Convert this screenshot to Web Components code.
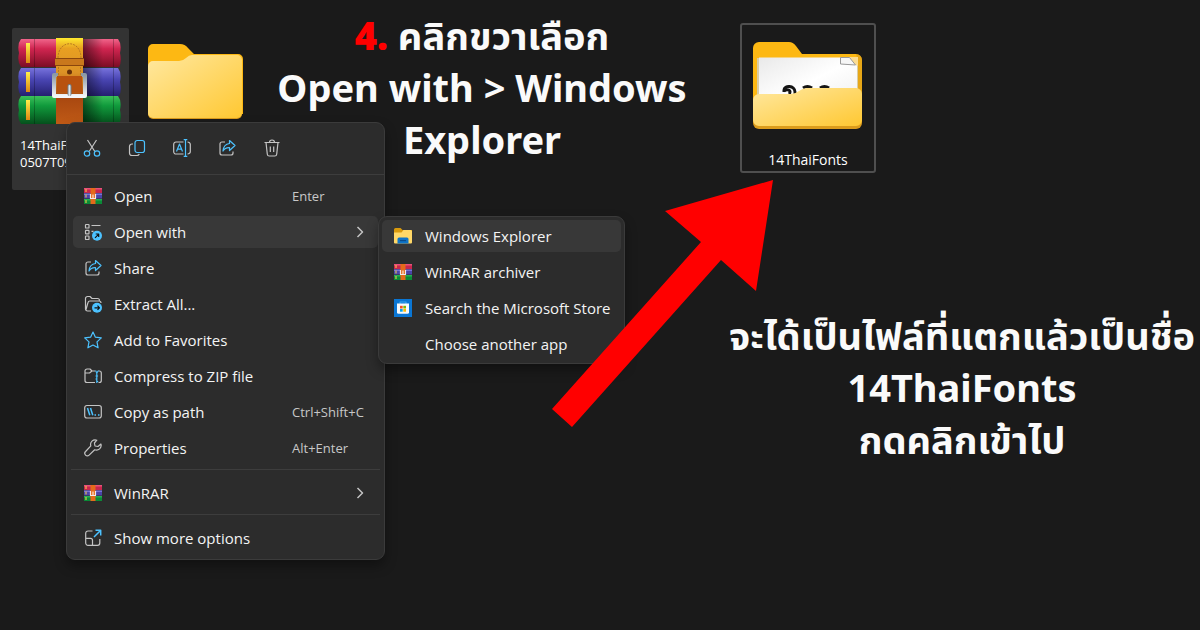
<!DOCTYPE html>
<html lang="th">
<head>
<meta charset="utf-8">
<meta name="viewport" content="width=device-width, initial-scale=1">
<title>14ThaiFonts</title>
<style>
  body {
    margin: 0;
    background: #1a1a1a;
    color: #fff;
    font-family: "Open Sans", "Noto Sans", sans-serif;
  }
</style>
</head>
<body>
<guide-page></guide-page>

<script>
const BLUE = '#4cc2ff';

const WINRAR = `
  <path fill="#c8264e" d="M0 1h18v5H0z"/><path fill="#e8517a" d="M0 1h18v1.5H0z"/>
  <path fill="#4a45a8" d="M0 6.5h18v5H0z"/><path fill="#7770d6" d="M0 6.5h18V8H0z"/>
  <path fill="#0b8a37" d="M0 12h18v5H0z"/><path fill="#25b052" d="M0 12h18v1.5H0z"/>
  <path fill="#ffd24a" d="M1.5 2h1v3h-1zM1.5 7.500h1v3h-1zM1.500 13h1v3h-1z"/>
  <path fill="#e46a1b" d="M6.500 1h5v16h-5z"/>
  <path fill="none" stroke="#f3e9ea" stroke-width="1.200" d="M6.500 7v4.500h5V7"/>
  <path fill="#fff" d="M8.500 7.500h1V11h-1z"/>`;

const SHARE = `
  <path d="M7 3H4a2 2 0 0 0-2 2v9a2 2 0 0 0 2 2h9a2 2 0 0 0 2-2v-1.500"/>
  <path stroke="${BLUE}" d="M11.500 1.500 17 6.500l-5.500 5V8.700C8.500 8.500 6.500 9.500 5 12c.3-4 2.500-7 6.500-7.500z"/>`;

// 18x18 glyphs, drawn with a light outline unless a shape sets its own paint
const ICONS = {
  cut: `<path d="M4.500 1l7.300 11.500M13.500 1 6.200 12.500"/>
    <g stroke="${BLUE}"><circle cx="4" cy="14.500" r="2.700"/><circle cx="14" cy="14.500" r="2.700"/></g>`,
  copy: `<path d="M5 5H4a2.500 2.500 0 0 0-2.500 2.500V14A2.500 2.500 0 0 0 4 16.500h5a2.500 2.500 0 0 0 2.300-1.500"/>
    <rect x="7" y="1.500" width="9.500" height="12" rx="2.200" stroke="${BLUE}"/>`,
  rename: `<path d="M10.500 3H3a2.300 2.300 0 0 0-2.300 2.300v7.400A2.300 2.300 0 0 0 3 15h7.500M14.500 3a2.800 2.300 0 0 1 2.800 2.300v7.400a2.800 2.300 0 0 1-2.800 2.300"/>
    <path stroke="${BLUE}" d="M3.500 12.500 6.500 5l3 7.500M4.500 10.200h4M12.500.700v16.600M10.700.700h3.600M10.700 17.300h3.600"/>`,
  share: SHARE,
  trash: `<path d="M1.500 3.500h15M6.500 3.500a2.500 2.500 0 0 1 5 0M3 3.500l1.300 11.700a2 2 0 0 0 2 1.800h5.400a2 2 0 0 0 2-1.800L15 3.500M7.300 7.500v5.500M10.700 7.500v5.500"/>`,
  winrar: WINRAR,
  openwith: `<rect x="1.500" y="1.500" width="3.500" height="3.500" rx=".6"/><rect x="1.500" y="7.300" width="3.500" height="3.500" rx=".6"/><rect x="1.500" y="13" width="3.500" height="3.500" rx=".6"/>
    <path d="M7.500 2.500h9M7.500 8.300h2"/>
    <circle cx="13" cy="12.800" r="5" fill="${BLUE}" stroke="none"/>
    <path stroke="#111" d="M11 14.800l3.500-3.500M11.700 11h3v3"/>`,
  extract: `<path d="M7 16H3.500a2 2 0 0 1-2-2V3.500a2 2 0 0 1 2-2H6l2 2h5.500a2 2 0 0 1 2 2M2 14.500l2-7a2 2 0 0 1 2-1.500h9a2 2 0 0 1 2 2"/>
    <circle cx="13" cy="12.800" r="5" fill="${BLUE}" stroke="none"/>
    <path stroke="#111" d="M10.500 12.800h5M13.500 10.700l2 2.100-2 2.100"/>`,
  star: `<path stroke="${BLUE}" d="M9 1l2.400 5.200 5.900.700-4.300 4 1.100 5.900L9 14l-5.100 2.800L5 10.900l-4.300-4 5.900-.700z"/>`,
  zip: `<path d="M11 4H8L6 2H3a2 2 0 0 0-2 2v9.500a2 2 0 0 0 2 2h8M1 6h4.500L8 4M14.500 4h.8a2 2 0 0 1 2 2v7.500a2 2 0 0 1-2 2h-.8"/>
    <path stroke="${BLUE}" d="M11.500 3.500l1.300 2.500v3M14.500 3.500 12.800 6M11.500 9h2.600M12.800 9v7M11.500 12h1.300M12.800 14.500h1.400"/>`,
  path: `<rect x=".7" y="2.500" width="16.600" height="12.500" rx="2.200"/>
    <path stroke="${BLUE}" stroke-width="1.500" d="M3.500 5l2.300 7.300M6.500 5l2.300 7.300M10.500 12h1.500M14 12h1.500"/>`,
  wrench: `<path d="M12.800 1.200a4.600 4.600 0 0 0-6 5.700L1.600 12.500a2.400 2.400 0 0 0 3.500 3.600l5.600-5.300a4.700 4.700 0 0 0 6.200-5.800L14 7.500 11 7l-.600-3z"/>`,
  more: `<path d="M8.500 2H4a2.300 2.300 0 0 0-2.300 2.300V14A2.300 2.300 0 0 0 4 16.300h9.500a2.300 2.300 0 0 0 2.300-2.300v-4M1.700 9.300h4.800A2 2 0 0 1 8.500 11.300v5"/>
    <path stroke="${BLUE}" stroke-width="1.500" d="M10 8l6.500-6.500M11.500 1.300h5.200v5.200"/>`,
  explorer: `<path fill="#d99a0d" d="M0 2.500A1.500 1.500 0 0 1 1.500 1h5L8.500 3H18v5H0z"/>
    <path fill="#ffd868" d="M0 5.500h7.500L9.500 3H16.500A1.500 1.500 0 0 1 18 4.500v11a1 1 0 0 1-1 1H1a1 1 0 0 1-1-1z"/>
    <path fill="#0f74c8" d="M3.500 16.500V12A1.500 1.500 0 0 1 5 10.500h8a1.500 1.500 0 0 1 1.500 1.500v4.500z"/>
    <path fill="#0a4c8c" d="M6 13h6v1.200H6z"/>`,
  store: `<path fill="#0a76d4" d="M0 0h18v18H0z"/><path fill="none" stroke="#38a4ec" d="M6 5V3h6v2"/>
    <path fill="#f7f9fb" d="M3 4.500h12v8.800a1.500 1.500 0 0 1-1.500 1.500h-9A1.500 1.500 0 0 1 3 13.300z"/>
    <path fill="#f25022" d="M6 6.800h2.700v2.700H6z"/><path fill="#7fba00" d="M9.300 6.800H12v2.700H9.300z"/>
    <path fill="#00a4ef" d="M6 10h2.700v2.700H6z"/><path fill="#ffb900" d="M9.300 10H12v2.700H9.300z"/>`,
  chevron: `<path stroke-width="1.500" d="M6.500 4l5 5-5 5"/>`,
  none: ''
};

const SOLID = ['winrar', 'explorer', 'store'];

class UiIcon extends HTMLElement {
  constructor() {
    super();
    this.attachShadow({ mode: 'open' });
  }

  connectedCallback() {
    const name = this.getAttribute('name') || 'none';
    const stroke = SOLID.includes(name) ? 'none' : '#c4c4c4';
    this.shadowRoot.innerHTML = `
      <style>
        :host { display: block; flex: none; width: 18px; height: 18px; }
        svg { display: block; width: 100%; height: 100%; }
      </style>
      <svg viewBox="0 0 18 18" fill="none" stroke="${stroke}" stroke-width="1.200" stroke-linejoin="round" aria-hidden="true">${ICONS[name]}</svg>
    `;
  }
}

class MenuItem extends HTMLElement {
  constructor() {
    super();
    this.attachShadow({ mode: 'open' });
  }

  connectedCallback() {
    const shortcut = this.getAttribute('shortcut');
    this.shadowRoot.innerHTML = `
      <style>
        :host { display: block; position: relative; padding: 2px 6px; }
        :host([compact]) { padding: 2px 3px; }
        button {
          display: grid;
          grid-template-columns: 18px 1fr auto;
          align-items: center;
          gap: 12px;
          width: 100%;
          height: 32px;
          padding: 0 9px 0 11px;
          border: 0;
          border-radius: 5px;
          background: none;
          color: #f4f4f4;
          font: inherit;
          text-align: left;
          white-space: nowrap;
        }
        :host([compact]) button { gap: 13px; padding: 0 0 0 12px; }
        :host([active]) button, button:hover { background: #383838; }
        kbd {
          width: 77px;
          color: #c8c8c8;
          font: 13px/16px "Open Sans", sans-serif;
        }
      </style>
      <button type="button" role="menuitem">
        <ui-icon name="${this.getAttribute('icon') || 'none'}"></ui-icon>
        <span><slot></slot></span>
        ${shortcut ? `<kbd>${shortcut}</kbd>` : ''}
        ${this.hasAttribute('more') ? '<ui-icon name="chevron"></ui-icon>' : ''}
      </button>
      <slot name="submenu"></slot>
    `;
  }
}

class MenuPanel extends HTMLElement {
  constructor() {
    super();
    this.attachShadow({ mode: 'open' });
    this.shadowRoot.innerHTML = `
      <style>
        :host {
          display: block;
          box-sizing: border-box;
          border: 1px solid #3b3b3b;
          border-radius: 9px;
          background: #2c2c2c;
          box-shadow: 0 6px 12px rgba(0, 0, 0, .35);
          font-size: 15px;
          line-height: 20px;
        }
      </style>
      <slot></slot>
    `;
  }
}

class MenuToolbar extends HTMLElement {
  constructor() {
    super();
    this.attachShadow({ mode: 'open' });
    const tools = [['cut', 'Cut'], ['copy', 'Copy'], ['rename', 'Rename'], ['share', 'Share'], ['trash', 'Delete']];
    this.shadowRoot.innerHTML = `
      <style>
        :host {
          display: flex;
          gap: 13px;
          padding: 9px 9px 10px;
          border-bottom: 1px solid #3d3d3d;
        }
        button {
          display: grid;
          place-items: center;
          width: 32px;
          height: 32px;
          padding: 0;
          border: 0;
          border-radius: 5px;
          background: none;
        }
        button:hover { background: #383838; }
      </style>
      ${tools.map(([icon, label]) => `<button type="button" aria-label="${label}"><ui-icon name="${icon}"></ui-icon></button>`).join('')}
    `;
  }
}

class ContextMenu extends HTMLElement {
  constructor() {
    super();
    this.attachShadow({ mode: 'open' });
    this.shadowRoot.innerHTML = `
      <style>
        :host { display: block; width: 319px; }
        .rows { padding: 3px 0; }
        hr { margin: 3px 4px 5px; border: 0; border-top: 1px solid #3d3d3d; }
        .sub {
          position: absolute;
          top: 2px;
          left: 311px;
          width: 247px;
          padding: 1px 0;
        }
      </style>
      <menu-panel role="menu">
        <menu-toolbar></menu-toolbar>
        <div class="rows">
          <menu-item icon="winrar" shortcut="Enter">Open</menu-item>
          <menu-item icon="openwith" more active>Open with
            <menu-panel class="sub" slot="submenu" role="menu">
              <menu-item compact icon="explorer" active>Windows Explorer</menu-item>
              <menu-item compact icon="winrar">WinRAR archiver</menu-item>
              <menu-item compact icon="store">Search the Microsoft Store</menu-item>
              <menu-item compact>Choose another app</menu-item>
            </menu-panel>
          </menu-item>
          <menu-item icon="share">Share</menu-item>
          <menu-item icon="extract">Extract All...</menu-item>
          <menu-item icon="star">Add to Favorites</menu-item>
          <menu-item icon="zip">Compress to ZIP file</menu-item>
          <menu-item icon="path" shortcut="Ctrl+Shift+C">Copy as path</menu-item>
          <menu-item icon="wrench" shortcut="Alt+Enter">Properties</menu-item>
          <hr>
          <menu-item icon="winrar" more>WinRAR</menu-item>
          <hr>
          <menu-item icon="more">Show more options</menu-item>
        </div>
      </menu-panel>
    `;
  }
}

class ArchiveArt extends HTMLElement {
  constructor() {
    super();
    this.attachShadow({ mode: 'open' });
    // one book of the stack: top edge and gradient id
    const book = (y, id) => `
      <path fill="url(#${id})" d="M3 ${y}h97q4 5 2 14 2 9-1 14H3q-4-5-2-14-2-9 2-14z"/>
      <path fill="url(#gold)" d="M8 ${y + 4}h4v20H8z"/>
      <path stroke="#000" stroke-opacity=".25" d="M16.500 ${y}v28M95.500 ${y}v28"/>`;
    this.shadowRoot.innerHTML = `
      <style>
        :host { display: block; }
        svg { display: block; }
      </style>
      <svg width="104" height="88" viewBox="0 0 104 88" fill="none" aria-hidden="true">
        <defs>
          <linearGradient id="red" x2="0" y2="1"><stop stop-color="#f0648a"/><stop offset=".35" stop-color="#d02550"/><stop offset="1" stop-color="#7c0d24"/></linearGradient>
          <linearGradient id="blue" x2="0" y2="1"><stop stop-color="#7772dc"/><stop offset=".4" stop-color="#4a46b4"/><stop offset="1" stop-color="#252070"/></linearGradient>
          <linearGradient id="green" x2="0" y2="1"><stop stop-color="#3cc05a"/><stop offset=".35" stop-color="#109a3c"/><stop offset="1" stop-color="#05501c"/></linearGradient>
          <linearGradient id="gold" x2="0" y2="1"><stop stop-color="#fff04a"/><stop offset="1" stop-color="#dc8612"/></linearGradient>
          <linearGradient id="belt" x2="0" y2="1"><stop stop-color="#ffe92e"/><stop offset=".12" stop-color="#e8a021"/><stop offset=".4" stop-color="#dc9226"/><stop offset=".7" stop-color="#a94810"/><stop offset="1" stop-color="#c05a16"/></linearGradient>
          <linearGradient id="shade"><stop stop-opacity=".5"/><stop offset="1" stop-opacity="0"/></linearGradient>
          <linearGradient id="steel" x2="0" y2="1"><stop stop-color="#8d9aa5"/><stop offset="1" stop-color="#f4f6f8"/></linearGradient>
        </defs>
        ${book(2, 'red')}${book(31, 'blue')}${book(59, 'green')}
        <path fill="url(#shade)" d="M65 2h20v85H65z"/>
        <path fill="url(#belt)" d="M38 1h27v86H38z"/>
        <path fill="#c9781c" d="M37 21h29v8H37z"/>
        <path stroke="#8a460d" d="M37 21.500h29M37 28.500h29"/>
        <path stroke="#b87820" stroke-dasharray="2 1" d="M40 21c0-19 23-19 23 0M40.500 30v9M62.500 30v9"/>
        <path stroke="url(#steel)" stroke-width="4" stroke-linejoin="round" d="M40 38h-4v21h31V38h-4"/>
        <path fill="#b8520f" d="M39 39h25v16H39z"/>
        <circle cx="51.500" cy="35" r="2.500" fill="#66300a"/>
        <path stroke="#6f7c86" stroke-width="4" stroke-linecap="round" d="M51.500 49v8"/>
        <path stroke="#dde5ea" stroke-width="2" stroke-linecap="round" d="M51.500 49v9"/>
      </svg>
    `;
  }
}

class FolderArt extends HTMLElement {
  constructor() {
    super();
    this.attachShadow({ mode: 'open' });
  }

  connectedCallback() {
    const full = this.hasAttribute('full');
    const defs = `
      <defs>
        <linearGradient id="front" x2="1" y2="1"><stop stop-color="#ffe8a0"/><stop offset="1" stop-color="#ffc832"/></linearGradient>
        <linearGradient id="paper" x2="1" y2="1"><stop stop-color="#e9e9e9"/><stop offset=".5" stop-color="#fff"/><stop offset="1" stop-color="#eee"/></linearGradient>
      </defs>`;
    const empty = `
      <svg width="95" height="76" viewBox="0 0 95 76" aria-hidden="true">${defs}
        <path fill="#fdb813" d="M0 5a5 5 0 0 1 5-5h27q5 0 8 4l6 6h44a5 5 0 0 1 5 5v55H0z"/>
        <path fill="#dc9c1c" d="M0 60v10a5 5 0 0 0 5 5h84a5 5 0 0 0 5-5V60z"/>
        <path fill="url(#front)" d="M0 22a5 5 0 0 1 5-5h26q4 0 7-3t6-3h45a5 5 0 0 1 5 5v53a5 5 0 0 1-5 5H5a5 5 0 0 1-5-5z"/>
      </svg>`;
    // opened folder with a font preview sheet peeking out
    const filled = `
      <svg width="110" height="88" viewBox="0 0 110 88" aria-hidden="true">${defs}
        <path fill="#fdb813" d="M0 6a6 6 0 0 1 6-6h30q4 0 7 4l6 8h54a6 6 0 0 1 6 6v58H0z"/>
        <path fill="#d99b1b" d="M103 12a6 6 0 0 1 6 6v40h-5V16z" opacity=".6"/>
        <path fill="#d9cda5" d="M4 16h101v50H4z"/>
        <path fill="url(#paper)" d="M6 15.500h81l17 8V66H6z"/>
        <path fill="#fbdc92" d="M87 15h18v9z"/>
        <path fill="#f6f6f6" stroke="#999" d="M87.500 15.500v6.500l15 1-6-7.500z"/>
        <g fill="none" stroke="#151515" stroke-width="3">
          <path d="M31 50v-2c0-5 11-5 11 2v5M31 49c4-3 8 0 5 3"/>
          <path d="M50 46c3-2 6-2 9 0M67 46c3-2 6-2 9 0"/>
        </g>
        <path fill="#dc9c1c" d="M0 72v9a6 6 0 0 0 6 6h97a6 6 0 0 0 6-6v-9z"/>
        <path fill="url(#front)" d="M0 58a6 6 0 0 1 6-6h32q4 0 8-3t8-3h49a6 6 0 0 1 6 6v26a6 6 0 0 1-6 6H6a6 6 0 0 1-6-6z"/>
      </svg>`;
    this.shadowRoot.innerHTML = `
      <style>
        :host { display: block; }
        svg { display: block; }
      </style>
      ${full ? filled : empty}
    `;
  }
}

class FileTile extends HTMLElement {
  constructor() {
    super();
    this.attachShadow({ mode: 'open' });
    this.shadowRoot.innerHTML = `
      <style>
        :host {
          display: flex;
          flex-direction: column;
          box-sizing: border-box;
          font-size: 14px;
          line-height: 17px;
          white-space: nowrap;
        }
        :host([selected]) {
          width: 117px;
          height: 162px;
          padding: 9px 6px;
          border-radius: 2px;
          background: #333;
        }
        :host([selected]) .name { padding: 12px 2px; font-size: 13px; }
        :host([focused]) {
          align-items: center;
          width: 136px;
          padding: 17px 0 3px;
          border: 2px solid #4f4f4f;
          border-radius: 3px;
        }
        :host([focused]) .name { padding-top: 21px; }
      </style>
      <slot name="art"></slot>
      <div class="name"><slot></slot></div>
    `;
  }
}

class GuideNote extends HTMLElement {
  constructor() {
    super();
    this.attachShadow({ mode: 'open' });
    this.shadowRoot.innerHTML = `
      <style>
        :host {
          display: block;
          color: #fafafa;
          font: 700 38px/52px "Noto Sans", "Noto Sans Thai", sans-serif;
          text-align: center;
          white-space: nowrap;
        }
      </style>
      <slot></slot>
    `;
  }
}

class GuideArrow extends HTMLElement {
  constructor() {
    super();
    this.attachShadow({ mode: 'open' });
    this.shadowRoot.innerHTML = `
      <style>
        :host { display: block; }
        svg { display: block; }
      </style>
      <svg width="221" height="247" viewBox="0 0 221 247" aria-hidden="true">
        <path fill="#f00" d="M221 0 113 31l36 31L0 229l20 18L169 80l35 31z"/>
      </svg>
    `;
  }
}

class GuidePage extends HTMLElement {
  constructor() {
    super();
    this.attachShadow({ mode: 'open' });
    this.shadowRoot.innerHTML = `
      <style>
        :host {
          display: grid;
          grid-template-columns: 254px 456px 1fr;
          position: relative;
          box-sizing: border-box;
          min-height: 100vh;
          overflow: hidden;
        }
        .files { display: flex; align-items: flex-start; gap: 19px; padding: 28px 0 0 12px; }
        .files file-tile + file-tile { padding-top: 16px; }
        .step { padding-top: 9px; }
        .step b { color: #f00; }
        .result { padding: 23px 0 0 14px; }
        .result file-tile { margin: 0 0 136px 16px; }
        context-menu { position: absolute; left: 66px; top: 122px; }
        guide-arrow { position: absolute; left: 552px; top: 180px; }
      </style>
      <section class="files">
        <file-tile selected><archive-art slot="art"></archive-art>14ThaiFo<br>0507T09</file-tile>
        <file-tile><folder-art slot="art"></folder-art></file-tile>
      </section>
      <guide-note class="step"><b>4.</b> คลิกขวาเลือก<br>Open with &gt; Windows<br>Explorer</guide-note>
      <section class="result">
        <file-tile focused><folder-art slot="art" full></folder-art>14ThaiFonts</file-tile>
        <guide-note>จะได้เป็นไฟล์ที่แตกแล้วเป็นชื่อ<br>14ThaiFonts<br>กดคลิกเข้าไป</guide-note>
      </section>
      <context-menu></context-menu>
      <guide-arrow></guide-arrow>
    `;
  }
}

customElements.define('ui-icon', UiIcon);
customElements.define('menu-item', MenuItem);
customElements.define('menu-panel', MenuPanel);
customElements.define('menu-toolbar', MenuToolbar);
customElements.define('context-menu', ContextMenu);
customElements.define('archive-art', ArchiveArt);
customElements.define('folder-art', FolderArt);
customElements.define('file-tile', FileTile);
customElements.define('guide-note', GuideNote);
customElements.define('guide-arrow', GuideArrow);
customElements.define('guide-page', GuidePage);
</script>
</body>
</html>
